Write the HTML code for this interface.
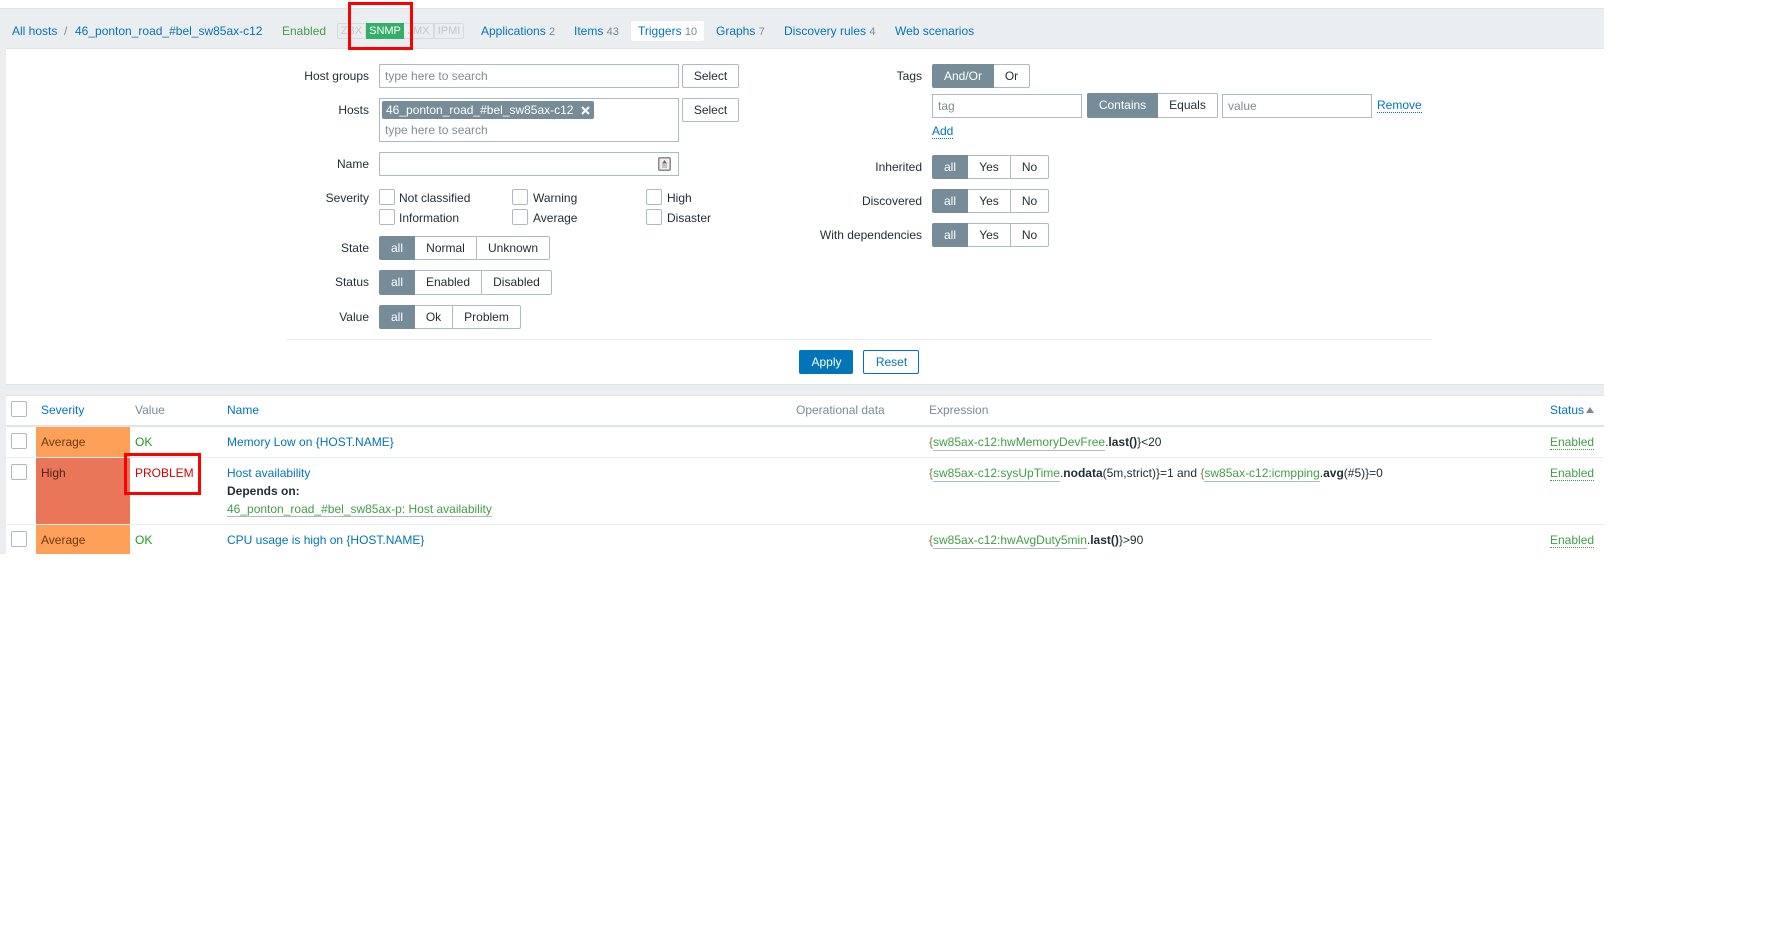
<!DOCTYPE html>
<html lang="en"><head><meta charset="utf-8"><title>Triggers</title>
<style>
html,body{margin:0;padding:0;background:#fff}
body{position:relative;width:1780px;height:928px;overflow:hidden;font:12px "Liberation Sans",Arial,sans-serif;color:#1f2c33}
div,span.a{position:absolute;box-sizing:border-box}
.t{white-space:nowrap;line-height:14px;height:14px}
.b{color:#0275b8}.g{color:#768d99}.gr{color:#429e47}.mu{color:#5f6f78}
.in{background:#fff;border:1px solid #acbbc2}
.ph{color:#7f8e96}
.btn{background:#fff;border:1px solid #acbbc2;border-radius:2px;text-align:center;line-height:22px}
.s{border:1px solid #acbbc2;background:#fff;text-align:center;line-height:22px;border-left:0}
.on{background:#768d99;border-color:#768d99;color:#fff;border-radius:2px 0 0 2px;border-left:1px solid #768d99}
.e{border-radius:0 2px 2px 0}
.c{width:16px;height:16px;background:#fff;border:1px solid #acbbc2;border-radius:2px}
.l{border-bottom:1px dotted #0275b8;height:15px}
u{text-decoration:none;color:#429e47;border-bottom:1px solid #acbbc2;padding-bottom:1px}
i{font-style:normal;color:#8a7a50}
b{font-weight:bold}
.d{color:#c0c8cc;font-size:11px;line-height:14px;text-align:center;top:23px;height:16px;border:1px solid #d5dcdf}
</style></head><body>
<div style="left:0;top:8px;width:1604px;height:546px;background:#ebeef0"></div>
<div style="left:0;top:8px;width:1604px;height:1px;background:#dfe4e7"></div>
<div style="left:6px;top:48px;width:1598px;height:337px;background:#fff;border-top:1px solid #dfe4e7;border-bottom:1px solid #dfe4e7"></div>
<div style="left:6px;top:395px;width:1598px;height:159px;background:#fff;border-top:1px solid #dfe4e7"></div>

<div class="t b" style="left:12px;top:24px">All hosts</div>
<div class="t g" style="left:64px;top:24px">/</div>
<div class="t b" style="left:75px;top:24px">46_ponton_road_#bel_sw85ax-c12</div>
<div class="t gr" style="left:282px;top:24px">Enabled</div>
<div class="d" style="left:337px;width:29px;border-radius:2px 0 0 2px">ZBX</div>
<div style="left:366px;top:23px;width:38px;height:16px;background:#34af67;color:#fff;font-size:11px;line-height:16px;text-align:center">SNMP</div>
<div class="d" style="left:404px;width:30px;border-left:0">JMX</div>
<div class="d" style="left:434px;width:30px;border-left:1px solid #d5dcdf;border-radius:0 2px 2px 0">IPMI</div>
<div style="left:348px;top:2px;width:65px;height:48px;border:3px solid #f00"></div>
<div class="t b" style="left:481px;top:24px">Applications <span class="g" style="font-size:11px">2</span></div>
<div class="t b" style="left:574px;top:24px">Items <span class="g" style="font-size:11px">43</span></div>
<div style="left:631px;top:21px;width:73px;height:20px;background:#fff;border-radius:2px"></div>
<div class="t b" style="left:638px;top:24px">Triggers <span class="g" style="font-size:11px">10</span></div>
<div class="t b" style="left:716px;top:24px">Graphs <span class="g" style="font-size:11px">7</span></div>
<div class="t b" style="left:784px;top:24px">Discovery rules <span class="g" style="font-size:11px">4</span></div>
<div class="t b" style="left:895px;top:24px">Web scenarios</div>

<!-- filter left -->
<div class="t" style="right:1411px;top:69px">Host groups</div>
<div class="in" style="left:379px;top:64px;width:300px;height:24px"></div>
<div class="t ph" style="left:385px;top:69px">type here to search</div>
<div class="btn" style="left:682px;top:64px;width:57px;height:24px">Select</div>
<div class="t" style="right:1411px;top:103px">Hosts</div>
<div class="in" style="left:379px;top:98px;width:300px;height:44px"></div>
<div style="left:382px;top:101px;width:212px;height:18px;background:#768d99;border-radius:2px"></div>
<div class="t" style="left:386px;top:103px;color:#fff">46_ponton_road_#bel_sw85ax-c12</div>
<svg style="position:absolute;left:581px;top:106px" width="9" height="9" viewBox="0 0 9 9"><path d="M1 1L8 8M8 1L1 8" stroke="#fff" stroke-width="2"/></svg>
<div class="t ph" style="left:385px;top:123px">type here to search</div>
<div class="btn" style="left:682px;top:98px;width:57px;height:24px">Select</div>
<div class="t" style="right:1411px;top:157px">Name</div>
<div class="in" style="left:379px;top:152px;width:300px;height:24px"></div>
<svg style="position:absolute;left:658px;top:157px" width="13" height="14" viewBox="0 0 13 14"><rect x=".75" y=".75" width="11.5" height="12.5" rx="1" fill="#eee" stroke="#8a8a8a" stroke-width="1.5"/><path d="M6.5 3L9 6.500H4Z" fill="#666"/><path d="M4 8H9M4 10H9" stroke="#999"/></svg>

<div class="t" style="right:1411px;top:191px">Severity</div>
<div class="c" style="left:379px;top:189px"></div><div class="t" style="left:399px;top:191px">Not classified</div>
<div class="c" style="left:379px;top:209px"></div><div class="t" style="left:399px;top:211px">Information</div>
<div class="c" style="left:512px;top:189px"></div><div class="t" style="left:533px;top:191px">Warning</div>
<div class="c" style="left:512px;top:209px"></div><div class="t" style="left:533px;top:211px">Average</div>
<div class="c" style="left:646px;top:189px"></div><div class="t" style="left:667px;top:191px">High</div>
<div class="c" style="left:646px;top:209px"></div><div class="t" style="left:667px;top:211px">Disaster</div>

<div class="t" style="right:1411px;top:241px">State</div>
<div class="s on" style="left:379px;top:236px;width:36px;height:24px">all</div>
<div class="s" style="left:415px;top:236px;width:62px;height:24px">Normal</div>
<div class="s e" style="left:477px;top:236px;width:73px;height:24px">Unknown</div>

<div class="t" style="right:1411px;top:275px">Status</div>
<div class="s on" style="left:379px;top:270px;width:36px;height:25px;line-height:23px">all</div>
<div class="s" style="left:415px;top:270px;width:67px;height:25px;line-height:23px">Enabled</div>
<div class="s e" style="left:482px;top:270px;width:70px;height:25px;line-height:23px">Disabled</div>

<div class="t" style="right:1411px;top:310px">Value</div>
<div class="s on" style="left:379px;top:305px;width:36px;height:24px">all</div>
<div class="s" style="left:415px;top:305px;width:38px;height:24px">Ok</div>
<div class="s e" style="left:453px;top:305px;width:68px;height:24px">Problem</div>

<!-- filter right -->
<div class="t" style="right:858px;top:69px">Tags</div>
<div class="s on" style="left:932px;top:64px;width:62px;height:24px">And/Or</div>
<div class="s e" style="left:994px;top:64px;width:36px;height:24px">Or</div>
<div class="in ph" style="left:932px;top:94px;width:150px;height:24px;padding-left:5px;line-height:22px">tag</div>
<div class="s on" style="left:1087px;top:93px;width:71px;height:25px;line-height:22px">Contains</div>
<div class="s e" style="left:1158px;top:93px;width:60px;height:25px;line-height:22px">Equals</div>
<div class="in ph" style="left:1222px;top:94px;width:150px;height:24px;padding-left:5px;line-height:22px">value</div>
<div class="t b l" style="left:1377px;top:98px">Remove</div>
<div class="t b l" style="left:932px;top:124px">Add</div>

<div class="t" style="right:858px;top:160px">Inherited</div>
<div class="s on" style="left:932px;top:155px;width:36px;height:24px">all</div>
<div class="s" style="left:968px;top:155px;width:43px;height:24px">Yes</div>
<div class="s e" style="left:1011px;top:155px;width:38px;height:24px">No</div>
<div class="t" style="right:858px;top:194px">Discovered</div>
<div class="s on" style="left:932px;top:189px;width:36px;height:24px">all</div>
<div class="s" style="left:968px;top:189px;width:43px;height:24px">Yes</div>
<div class="s e" style="left:1011px;top:189px;width:38px;height:24px">No</div>
<div class="t" style="right:858px;top:228px">With dependencies</div>
<div class="s on" style="left:932px;top:223px;width:36px;height:24px">all</div>
<div class="s" style="left:968px;top:223px;width:43px;height:24px">Yes</div>
<div class="s e" style="left:1011px;top:223px;width:38px;height:24px">No</div>

<div style="left:286px;top:339px;width:1146px;height:1px;background:#ebeef0"></div>
<div class="btn" style="left:799px;top:350px;width:54px;height:24px;background:#0275b8;border-color:#0275b8;color:#fff;padding-left:1px">Apply</div>
<div class="btn b" style="left:863px;top:350px;width:56px;height:24px;border-color:#0275b8;padding-left:1px">Reset</div>

<!-- table -->
<div class="c" style="left:11px;top:401px"></div>
<div class="t b" style="left:41px;top:403px">Severity</div>
<div class="t g" style="left:135px;top:403px">Value</div>
<div class="t b" style="left:227px;top:403px">Name</div>
<div class="t g" style="left:796px;top:403px">Operational data</div>
<div class="t g" style="left:929px;top:403px">Expression</div>
<div class="t b" style="left:1550px;top:403px">Status</div>
<svg style="position:absolute;left:1586px;top:407px" width="8" height="6" viewBox="0 0 8 6"><path d="M4 0L8 6H0Z" fill="#768d99"/></svg>
<div style="left:6px;top:425px;width:1598px;height:2px;background:#dfe4e7"></div>

<div style="left:36px;top:427px;width:94px;height:30px;background:#ffa059"></div>
<div style="left:6px;top:457px;width:1598px;height:1px;background:#ebeef0"></div>
<div style="left:36px;top:458px;width:94px;height:66px;background:#e97659"></div>
<div style="left:6px;top:524px;width:1598px;height:1px;background:#ebeef0"></div>
<div style="left:36px;top:525px;width:94px;height:29px;background:#ffa059"></div>

<div class="c" style="left:11px;top:433px"></div>
<div class="t" style="left:41px;top:435px;color:#6b3a12">Average</div>
<div class="t" style="left:135px;top:435px;color:#1f9a1f">OK</div>
<div class="t b" style="left:227px;top:435px">Memory Low on {HOST.NAME}</div>
<div class="t" style="left:929px;top:435px"><i>{</i><u>sw85ax-c12:hwMemoryDevFree</u>.<b>last()</b>}&lt;20</div>
<div class="t gr l" style="left:1550px;top:435px;border-color:#429e47">Enabled</div>

<div class="c" style="left:11px;top:464px"></div>
<div class="t" style="left:41px;top:466px;color:#4a2415">High</div>
<div class="t" style="left:135px;top:466px;color:#d40000">PROBLEM</div>
<div class="t b" style="left:227px;top:466px">Host availability</div>
<div class="t" style="left:227px;top:484px"><b>Depends on:</b></div>
<div class="t gr" style="left:227px;top:502px;border-bottom:1px solid #acbbc2;height:15px">46_ponton_road_#bel_sw85ax-p: Host availability</div>
<div class="t" style="left:929px;top:466px"><i>{</i><u>sw85ax-c12:sysUpTime</u>.<b>nodata</b>(5m,strict)}=1 and <i>{</i><u>sw85ax-c12:icmpping</u>.<b>avg</b>(#5)}=0</div>
<div class="t gr l" style="left:1550px;top:466px;border-color:#429e47">Enabled</div>
<div style="left:124px;top:453px;width:77px;height:42px;border:3px solid #f00"></div>

<div class="c" style="left:11px;top:531px"></div>
<div class="t" style="left:41px;top:533px;color:#6b3a12">Average</div>
<div class="t" style="left:135px;top:533px;color:#1f9a1f">OK</div>
<div class="t b" style="left:227px;top:533px">CPU usage is high on {HOST.NAME}</div>
<div class="t" style="left:929px;top:533px"><i>{</i><u>sw85ax-c12:hwAvgDuty5min</u>.<b>last()</b>}&gt;90</div>
<div class="t gr l" style="left:1550px;top:533px;border-color:#429e47">Enabled</div>
</body></html>
